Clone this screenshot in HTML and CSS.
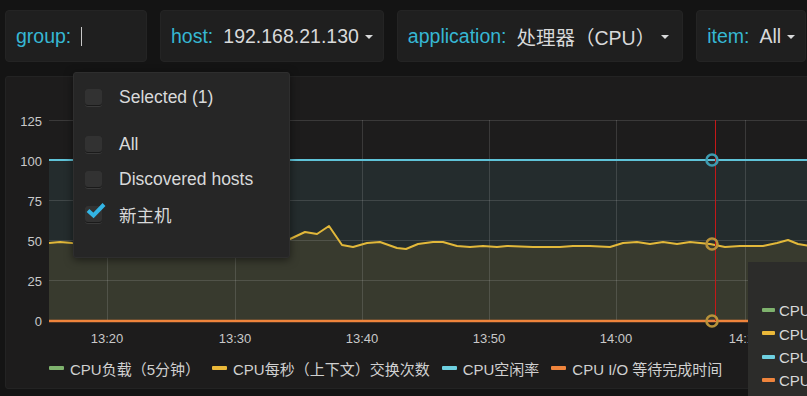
FILE: index.html
```html
<!DOCTYPE html>
<html lang="en">
<head>
    <meta charset="UTF-8">
    <title>CPU Dashboard</title>
    <link rel="stylesheet" href="styles.css">
</head>
<body>
    <div class="submenu">
        <div class="var var-group">
            <span class="var-label">group:</span>
            <span class="cursor"></span>
        </div>
        <div class="var">
            <span class="var-label">host:</span>
            <span class="var-value">192.168.21.130</span>
            <span class="caret"></span>
        </div>
        <div class="var var-app">
            <span class="var-label">application:</span>
            <span class="var-value">处理器（CPU）</span>
            <span class="caret"></span>
        </div>
        <div class="var">
            <span class="var-label">item:</span>
            <span class="var-value">All</span>
            <span class="caret"></span>
        </div>
    </div>

    <div class="panel">
        <svg class="graph" width="820" height="276">
            <g transform="translate(-6 -77)">
                <!-- fills -->
                <rect x="49" y="160" width="780" height="161" fill="#6ed0e0" fill-opacity="0.09"/>
                <path fill="#eab839" fill-opacity="0.1" d="M49,243 L60,242 L72,243 L90,244 L120,243 L150,242 L180,243 L210,244 L240,243 L270,242 L290,239 L305,232 L317,234 L329,226 L342,245 L353,247 L367,243 L380,242 L397,248 L406,249 L418,244 L433,242 L443,242 L457,246 L470,247 L483,246 L497,247 L507,246 L533,247 L560,247 L573,246 L590,246 L610,247 L623,243 L637,242 L650,244 L663,242 L677,244 L690,242 L710,244 L725,247 L740,246 L763,246 L777,243 L788,240 L798,244 L810,246 L810,321 L49,321 Z"/>

                <!-- grid -->
                <g stroke="#ffffff" stroke-opacity="0.13" stroke-width="1">
                    <line x1="49" y1="120.5" x2="830" y2="120.5"/>
                    <line x1="49" y1="160.5" x2="830" y2="160.5"/>
                    <line x1="49" y1="200.5" x2="830" y2="200.5"/>
                    <line x1="49" y1="240.5" x2="830" y2="240.5"/>
                    <line x1="49" y1="280.5" x2="830" y2="280.5"/>
                    <line x1="107.5" y1="120" x2="107.5" y2="321"/>
                    <line x1="235.5" y1="120" x2="235.5" y2="321"/>
                    <line x1="362.5" y1="120" x2="362.5" y2="321"/>
                    <line x1="489.5" y1="120" x2="489.5" y2="321"/>
                    <line x1="616.5" y1="120" x2="616.5" y2="321"/>
                    <line x1="745.5" y1="120" x2="745.5" y2="321"/>
                </g>

                <!-- series -->
                <line x1="49" y1="160" x2="830" y2="160" stroke="#5fc3d8" stroke-width="2"/>
                <polyline fill="none" stroke="#e2b83a" stroke-width="2" stroke-linejoin="round" points="49,243 60,242 72,243 90,244 120,243 150,242 180,243 210,244 240,243 270,242 290,239 305,232 317,234 329,226 342,245 353,247 367,243 380,242 397,248 406,249 418,244 433,242 443,242 457,246 470,247 483,246 497,247 507,246 533,247 560,247 573,246 590,246 610,247 623,243 637,242 650,244 663,242 677,244 690,242 710,244 725,247 740,246 763,246 777,243 788,240 798,244 810,246"/>
                <line x1="49" y1="321" x2="830" y2="321" stroke="#ef843c" stroke-width="2.5"/>

                <!-- hover marker -->
                <line x1="715.5" y1="120" x2="715.5" y2="321" stroke="#c41818" stroke-width="1"/>
                <g fill="none" stroke-width="2.6">
                    <circle cx="712" cy="160" r="5.5" stroke="#3e9bb0"/>
                    <circle cx="712" cy="244" r="5.5" stroke="#b8923a"/>
                    <circle cx="712" cy="321" r="5.5" stroke="#b8923a"/>
                </g>

                <!-- axes -->
                <g class="axis-y" text-anchor="end">
                    <text x="42" y="125.5">125</text>
                    <text x="42" y="165.5">100</text>
                    <text x="42" y="205.5">75</text>
                    <text x="42" y="245.5">50</text>
                    <text x="42" y="285.5">25</text>
                    <text x="42" y="326">0</text>
                </g>
                <g class="axis-x" text-anchor="middle">
                    <text x="107" y="343">13:20</text>
                    <text x="235" y="343">13:30</text>
                    <text x="362" y="343">13:40</text>
                    <text x="489" y="343">13:50</text>
                    <text x="616" y="343">14:00</text>
                    <text x="745" y="343">14:10</text>
                </g>
            </g>
        </svg>

        <div class="legend">
            <div class="legend-item"><span class="bar green"></span>CPU负载（5分钟）</div>
            <div class="legend-item"><span class="bar yellow"></span>CPU每秒（上下文）交换次数</div>
            <div class="legend-item"><span class="bar cyan"></span>CPU空闲率</div>
            <div class="legend-item"><span class="bar orange"></span>CPU I/O 等待完成时间</div>
        </div>

        <div class="tooltip">
            <div class="tip-row"><span class="bar green"></span>CPU负载</div>
            <div class="tip-row"><span class="bar yellow"></span>CPU每秒</div>
            <div class="tip-row"><span class="bar cyan"></span>CPU空闲率</div>
            <div class="tip-row"><span class="bar orange"></span>CPU I/O</div>
        </div>
    </div>

    <div class="dropdown">
        <div class="option"><span class="check"></span>Selected (1)</div>
        <div class="option-gap"></div>
        <div class="option"><span class="check"></span>All</div>
        <div class="option"><span class="check"></span>Discovered hosts</div>
        <div class="option">
            <span class="check checked">
                <svg width="22" height="18" viewBox="0 0 22 18"><polyline points="3,8.5 8.5,13.5 19,2.5" fill="none" stroke="#33b5e5" stroke-width="4"/></svg>
            </span>新主机
        </div>
    </div>
</body>
</html>
```

FILE: styles.css
```css
html, body {
    margin: 0;
    width: 807px;
    height: 396px;
    overflow: hidden;
}

body {
    background: #141414;
    font-family: "Liberation Sans", "Noto Sans CJK SC", sans-serif;
    color: #d8d9da;
    padding: 10px 0 0 5px;
    box-sizing: border-box;
}

/* variable bar */
.submenu {
    display: flex;
    gap: 13px;
    height: 52px;
    width: 900px;
}

.var {
    display: flex;
    align-items: center;
    flex-shrink: 0;
    padding: 0 10px;
    background: #1f1f1f;
    border: 1px solid #242424;
    border-radius: 4px;
    font-size: 19.5px;
}

.var-group {
    width: 142px;
    box-sizing: border-box;
}

.var-app {
    padding-right: 13px;
}

.var-label {
    color: #36b7d3;
    margin-right: 10px;
}

.var-value {
    color: #d8d9da;
}

.cursor {
    width: 1px;
    height: 19px;
    background: #c8c8c8;
}

.caret {
    width: 0;
    height: 0;
    margin-left: 6px;
    margin-top: 2px;
    border-left: 4px solid transparent;
    border-right: 4px solid transparent;
    border-top: 4px solid #d8d9da;
}

/* graph panel */
.panel {
    position: relative;
    margin-top: 14px;
    width: 820px;
    padding-bottom: 5px;
    background: #1d1c1c;
    border: 1px solid #232323;
    border-radius: 3px;
}

.graph {
    display: block;
}

.graph text {
    font-family: "Liberation Sans", sans-serif;
    font-size: 13px;
    fill: #c9c9c9;
}

.legend {
    display: flex;
    align-items: center;
    height: 30px;
    padding-left: 43px;
    font-size: 15px;
    color: #d0d0d0;
}

.legend-item {
    display: flex;
    align-items: center;
    margin-right: 12px;
}

.bar {
    display: inline-block;
    width: 15px;
    height: 4px;
    margin-right: 6px;
    border-radius: 1px;
}
.green { background: #7eb26d; }
.yellow { background: #eab839; }
.cyan { background: #6ed0e0; }
.orange { background: #ef843c; }

.tooltip {
    position: absolute;
    left: 742px;
    top: 185px;
    width: 120px;
    height: 150px;
    padding: 36px 0 0 14px;
    box-sizing: border-box;
    background: #2c2c2a;
    font-size: 15px;
    color: #d8d9da;
    white-space: nowrap;
}

.tip-row {
    display: flex;
    align-items: center;
    height: 23.5px;
}

.tip-row .bar {
    width: 13px;
    margin-right: 4px;
}

/* host dropdown */
.dropdown {
    position: absolute;
    left: 73px;
    top: 72px;
    width: 217px;
    height: 186px;
    box-sizing: border-box;
    padding: 7px 0 0 11px;
    background: #262626;
    border: 1px solid #2e2e2e;
    border-radius: 3px;
    box-shadow: 0 2px 8px rgba(0,0,0,0.5);
    font-size: 17.5px;
    color: #d8d9da;
}

.option {
    display: flex;
    align-items: center;
    height: 35px;
}

.option-gap {
    height: 12px;
}

.check {
    position: relative;
    width: 17px;
    height: 17px;
    margin-right: 17px;
    background: #323232;
    border-radius: 3px;
    box-shadow: inset 0 -1px 0 #1a1a1a, 0 1px 0 #3a3a3a;
}

.check svg {
    position: absolute;
    left: 0;
    top: -4px;
}
```
